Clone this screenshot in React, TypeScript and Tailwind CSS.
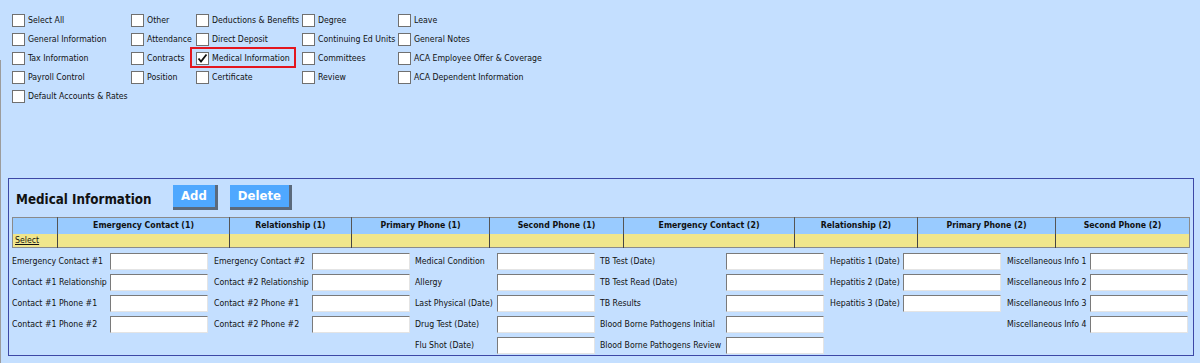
import type { ReactNode } from 'react';

const font = { fontFamily: '"DejaVu Sans Condensed", "DejaVu Sans", sans-serif' };

interface CheckItem {
  label: string;
  checked?: boolean;
  highlight?: boolean;
}

// five columns of checkboxes, top to bottom
const checkColumns: CheckItem[][] = [
  [
    { label: 'Select All' },
    { label: 'General Information' },
    { label: 'Tax Information' },
    { label: 'Payroll Control' },
    { label: 'Default Accounts & Rates' },
  ],
  [{ label: 'Other' }, { label: 'Attendance' }, { label: 'Contracts' }, { label: 'Position' }],
  [
    { label: 'Deductions & Benefits' },
    { label: 'Direct Deposit' },
    { label: 'Medical Information', checked: true, highlight: true },
    { label: 'Certificate' },
  ],
  [{ label: 'Degree' }, { label: 'Continuing Ed Units' }, { label: 'Committees' }, { label: 'Review' }],
  [
    { label: 'Leave' },
    { label: 'General Notes' },
    { label: 'ACA Employee Offer & Coverage' },
    { label: 'ACA Dependent Information' },
  ],
];

const columnWidths = ['w-[119px]', 'w-[65px]', 'w-[106px]', 'w-[96px]', 'w-[200px]'];

const headers = [
  { label: '', w: 'w-[45px]' },
  { label: 'Emergency Contact (1)', w: 'w-[172px]' },
  { label: 'Relationship (1)', w: 'w-[122px]' },
  { label: 'Primary Phone (1)', w: 'w-[138px]' },
  { label: 'Second Phone (1)', w: 'w-[134px]' },
  { label: 'Emergency Contact (2)', w: 'w-[171px]' },
  { label: 'Relationship (2)', w: 'w-[123px]' },
  { label: 'Primary Phone (2)', w: 'w-[138px]' },
  { label: 'Second Phone (2)', w: 'w-[134px]' },
];

// form fields, row by row, six label/input pairs per row (null = empty slot)
const formRows: (string | null)[][] = [
  ['Emergency Contact #1', 'Emergency Contact #2', 'Medical Condition', 'TB Test (Date)', 'Hepatitis 1 (Date)', 'Miscellaneous Info 1'],
  ['Contact #1 Relationship', 'Contact #2 Relationship', 'Allergy', 'TB Test Read (Date)', 'Hepatitis 2 (Date)', 'Miscellaneous Info 2'],
  ['Contact #1 Phone #1', 'Contact #2 Phone #1', 'Last Physical (Date)', 'TB Results', 'Hepatitis 3 (Date)', 'Miscellaneous Info 3'],
  ['Contact #1 Phone #2', 'Contact #2 Phone #2', 'Drug Test (Date)', 'Blood Borne Pathogens Initial', null, 'Miscellaneous Info 4'],
  [null, null, 'Flu Shot (Date)', 'Blood Borne Pathogens Review', null, null],
];

function Checkbox({ checked }: { checked?: boolean }) {
  return (
    <span className="flex h-[13px] w-[13px] shrink-0 items-center justify-center border border-[#707070] bg-white">
      {checked ? (
        <svg viewBox="0 0 11 11" className="h-[11px] w-[11px]">
          <path d="M1.5 5.5 L4 8.5 L9.5 1.5" fill="none" stroke="#111" strokeWidth="1.8" />
        </svg>
      ) : null}
    </span>
  );
}

function CheckRow({ item }: { item: CheckItem }) {
  return (
    <div className="relative flex h-[19px] items-center">
      {item.highlight ? (
        <span className="absolute left-[-6px] top-[-2px] h-[21px] w-[106px] border-2 border-[#E3161F]" />
      ) : null}
      <Checkbox checked={item.checked} />
      <span className="ml-[3px] whitespace-nowrap text-[8.7px] text-[#111]">{item.label}</span>
    </div>
  );
}

function BlueButton({ children }: { children: ReactNode }) {
  return (
    <button
      type="button"
      className="flex h-[25px] items-center border-r-[3px] border-b-[3px] border-t-0 border-l-0 border-[#5b6a7c] bg-[#4FA8FF] px-[8px] text-[13px] font-bold text-white"
    >
      {children}
    </button>
  );
}

function TextBox() {
  return (
    <input
      className="h-[17px] w-[98px] border border-t-[#7a7a7a] border-l-[#7a7a7a] border-r-[#e4e4e4] border-b-[#e4e4e4] bg-white"
      type="text"
    />
  );
}

// label cell widths, measured between the inputs
const labelCells = ['w-[98px] pl-0', 'w-[104px] pl-[6px]', 'w-[87px] pl-[5px]', 'w-[131px] pl-[5px]', 'w-[79px] pl-[6px]', 'w-[89px] pl-[6px]'];

export default function App() {
  return (
    <div className="relative h-[363px] w-full overflow-hidden bg-[#C4DFFF] text-[#111]" style={font}>
      <span className="absolute left-0 top-[60px] bottom-0 w-px bg-[#9c9c9c]" />

      <div className="flex pl-[12px] pt-[11px]">
        {checkColumns.map((col, i) => (
          <div key={i} className={columnWidths[i]}>
            {col.map((item) => (
              <CheckRow key={item.label} item={item} />
            ))}
          </div>
        ))}
      </div>

      <section className="ml-[8px] mt-[72px] h-[178px] w-[1186px] border border-[#3D48A6] px-[3px]">
        <div className="flex items-start pt-[6px]">
          <h2 className="w-[161px] pl-[4px] pt-[5px] text-[13.3px] font-bold">Medical Information</h2>
          <div className="flex gap-[12px]">
            <BlueButton>Add</BlueButton>
            <BlueButton>Delete</BlueButton>
          </div>
        </div>

        <table className="mt-[7px] table-fixed border-collapse border border-[#8a8a8a]">
          <thead>
            <tr className="h-[16px] bg-[#99CBFF]">
              {headers.map((h, i) => (
                <th
                  key={i}
                  className={`${h.w} border-l border-[#555] p-0 text-center text-[8.7px] font-bold leading-none first:border-l-0`}
                >
                  {h.label}
                </th>
              ))}
            </tr>
          </thead>
          <tbody>
            <tr className="h-[14px] bg-[#F0E68C]">
              {headers.map((h, i) => (
                <td key={i} className={`${h.w} border-l border-[#444] p-0 text-[8.7px] leading-none first:border-l-0`}>
                  {i === 0 ? <a className="pl-[2px] underline">Select</a> : null}
                </td>
              ))}
            </tr>
          </tbody>
        </table>

        <div className="mt-[5px]">
          {formRows.map((row, r) => (
            <div key={r} className="flex h-[21px] items-start">
              {row.map((label, c) => (
                <div key={c} className="flex">
                  <span className={`${labelCells[c]} flex h-[17px] items-center whitespace-nowrap text-[8.7px]`}>
                    {label ?? ''}
                  </span>
                  {label ? <TextBox /> : <span className="h-[17px] w-[98px]" />}
                </div>
              ))}
            </div>
          ))}
        </div>
      </section>
    </div>
  );
}
